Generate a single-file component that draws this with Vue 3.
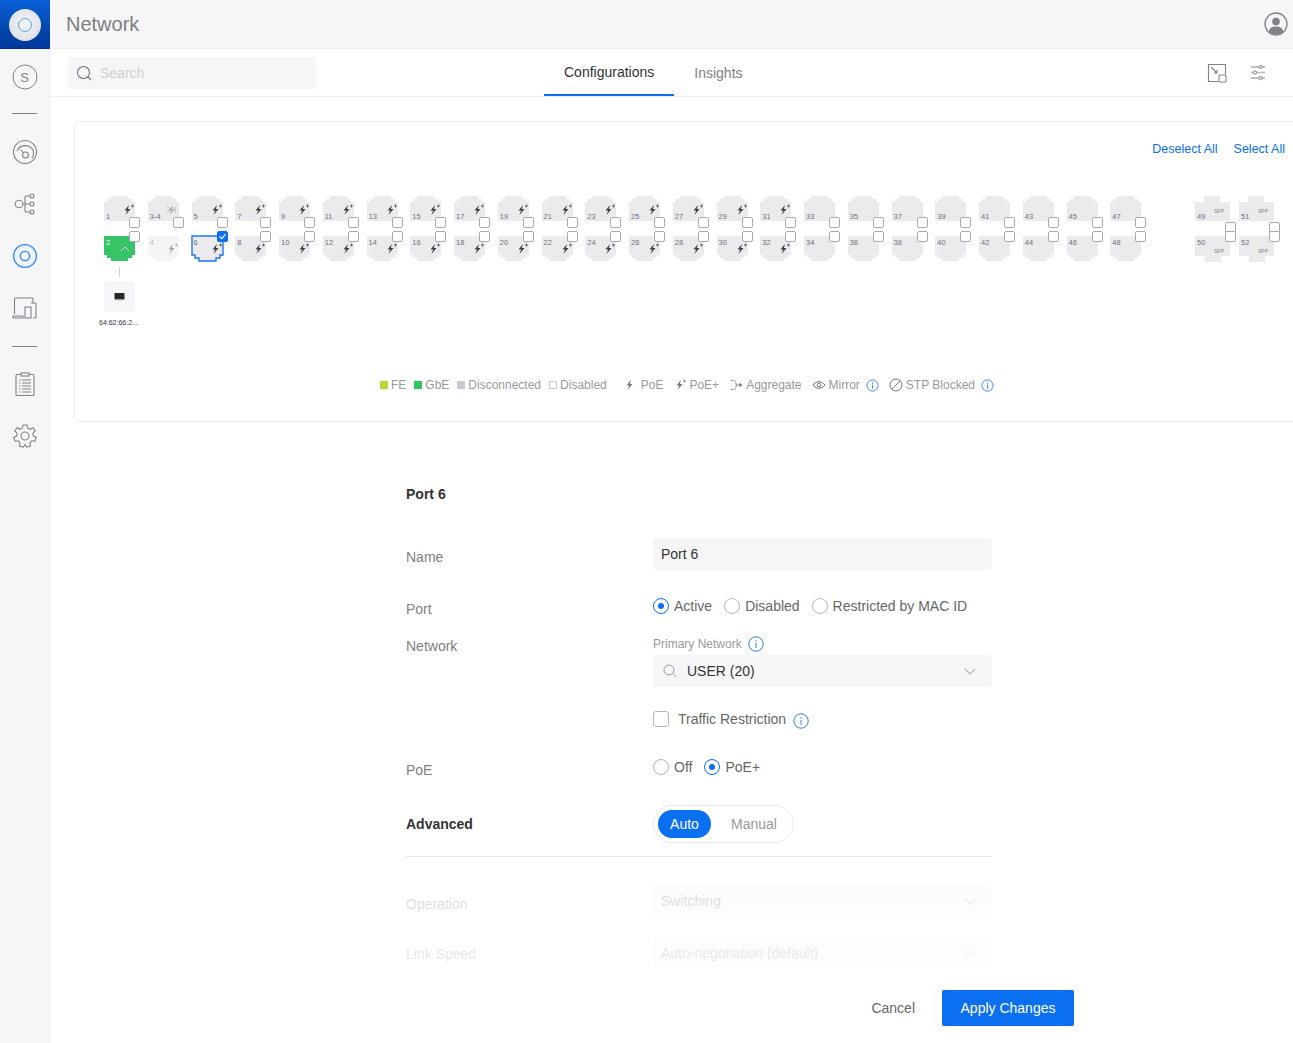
<script setup>
const cols = []
for (let i = 1; i <= 47; i += 2) {
  const top = i === 3 ? '3-4' : String(i)
  const bolt = i <= 31
  cols.push({
    top: { n: top, bolt: i !== 3 && bolt, agg: i === 3 },
    bottom: {
      n: String(i + 1),
      bolt: i + 1 <= 32 && i + 1 !== 2,
      green: i + 1 === 2,
      faded: i + 1 === 4,
      selected: i + 1 === 6,
    },
  })
}
const topPts = '0,6 3,6 3,3 7,3 7,0 24,0 24,3 28,3 28,6 31,6 31,25 0,25'
const botPts = '0,0 31,0 31,19 28,19 28,22 24,22 24,25 7,25 7,22 3,22 3,19 0,19'
const sfpTop = '0,6 9,6 9,0 25,0 25,6 35,6 35,25 0,25'
const sfpBot = '0,0 35,0 35,20 26,20 26,26 10,26 10,20 0,20'
const sfps = [
  { top: '49', bottom: '50' },
  { top: '51', bottom: '52' },
]
const bolt = 'M7 1 L2.5 6.5 L5.2 6.5 L3.5 11 L8.5 5 L5.8 5 Z'
const legendSwatches = [
  { label: 'FE', cls: 'fe' },
  { label: 'GbE', cls: 'gbe' },
  { label: 'Disconnected', cls: 'disc' },
  { label: 'Disabled', cls: 'dis' },
]
</script>

<template>
  <div class="app">
    <aside class="side">
      <div class="logo"><span class="logo-disc"><span class="logo-ring"></span></span></div>
      <div class="nav">
        <div class="nav-item">
          <svg width="26" height="26" viewBox="0 0 26 26" fill="none" stroke="#808288"><circle cx="13" cy="13" r="12"/></svg>
          <span class="nav-s">S</span>
        </div>
        <hr class="nav-line first" />
        <div class="nav-item">
          <svg width="26" height="26" viewBox="0 0 26 26" fill="none" stroke="#808288" stroke-width="1.1"><circle cx="13" cy="13" r="11.5"/><path d="M5 12 A9 9 0 0 1 21 11 A9 9 0 0 1 20 19"/><circle cx="13.5" cy="16" r="3"/><path d="M11.5 14 L8.5 10.5"/></svg>
        </div>
        <div class="nav-item">
          <svg width="26" height="26" viewBox="0 0 26 26" fill="none" stroke="#808288" stroke-width="1.1"><circle cx="7" cy="13" r="3.8"/><circle cx="20" cy="5" r="2"/><circle cx="20" cy="13" r="2"/><circle cx="20" cy="21" r="2"/><path d="M10.8 13 H18 M13 13 V6 Q13 5 14 5 H18 M13 13 V20 Q13 21 14 21 H18"/></svg>
        </div>
        <div class="nav-item">
          <svg width="26" height="26" viewBox="0 0 26 26" fill="none"><circle cx="13" cy="13" r="11.4" fill="#f0f3fb" stroke="#2f84ff" stroke-width="1.3"/><circle cx="13" cy="13" r="4.6" stroke="#2f84ff" stroke-width="1.3"/></svg>
        </div>
        <div class="nav-item">
          <svg width="26" height="26" viewBox="0 0 26 26" fill="none" stroke="#808288" stroke-width="1.1"><path d="M2.5 19 V4 Q2.5 3 3.5 3 H20 Q21 3 21 4 V8"/><path d="M1 21 H11 V23 H1 Z"/><rect x="13" y="12" width="6" height="11"/><path d="M19 8 H23 Q24 8 24 9 V22 Q24 23 23 23 H21"/></svg>
        </div>
        <hr class="nav-line second" />
        <div class="nav-item">
          <svg width="26" height="26" viewBox="0 0 26 26" fill="none" stroke="#808288" stroke-width="1.1"><rect x="4" y="3.5" width="18" height="21" rx="1"/><rect x="9" y="2" width="8" height="3" fill="#f6f6f8"/><path d="M7 9 H8.5 M10 9 H19 M7 12 H8.5 M10 12 H19 M7 15 H8.5 M10 15 H19 M7 18 H8.5 M10 18 H19 M7 21 H8.5 M10 21 H19"/></svg>
        </div>
        <div class="nav-item">
          <svg width="26" height="26" viewBox="0 0 26 26" fill="none" stroke="#808288" stroke-width="1.1"><circle cx="13" cy="13" r="4"/><path d="M11 2 H15 L15.7 5.2 L18 6.3 L20.9 4.7 L23.3 8 L21 10.2 L21.3 12.8 L24.2 14.4 L23 18.2 L19.8 17.8 L18 19.7 L18.5 23 L14.7 24.2 L13 21.5 L11.3 24.2 L7.5 23 L8 19.7 L6.2 17.8 L3 18.2 L1.8 14.4 L4.7 12.8 L5 10.2 L2.7 8 L5.1 4.7 L8 6.3 L10.3 5.2 Z"/></svg>
        </div>
      </div>
    </aside>

    <div class="main">
      <header class="top">
        <h1 class="title">Network</h1>
        <svg class="user" width="24" height="24" viewBox="0 0 24 24" fill="none"><circle cx="12" cy="12" r="11" stroke="#808288" stroke-width="1.3"/><circle cx="12" cy="9.5" r="3.8" fill="#808288"/><path d="M4.8 19.5 C5.5 15.5 8.5 14.5 12 14.5 C15.5 14.5 18.5 15.5 19.2 19.5 C17 21.7 14.8 22.5 12 22.5 C9.2 22.5 7 21.7 4.8 19.5 Z" fill="#808288"/></svg>
      </header>

      <nav class="bar">
        <div class="search">
          <svg width="16" height="16" viewBox="0 0 16 16" fill="none" stroke="#73767c" stroke-width="1.1"><circle cx="7.5" cy="7.5" r="6"/><path d="M12 12 L15 15"/></svg>
          <span>Search</span>
        </div>
        <div class="tabs">
          <span class="tab active">Configurations</span>
          <span class="tab">Insights</span>
        </div>
        <div class="tools">
          <svg width="20" height="20" viewBox="0 0 20 20" fill="none" stroke="#808288" stroke-width="1.1"><path d="M11 18.5 H1.5 V1.5 H18.5 V11"/><rect x="12" y="12" width="7" height="7" rx="0.5"/><path d="M4 4 L10 10 M10 7 V10 H7"/></svg>
          <svg width="18" height="18" viewBox="0 0 18 18" fill="none" stroke="#808288" stroke-width="1"><path d="M2 3 H16 M2 14 H16"/><path d="M2 8.5 H16" stroke="#b9bbc0" stroke-width="1.6"/><circle cx="11.5" cy="3" r="1.6" fill="#fff"/><circle cx="6" cy="8.5" r="1.6" fill="#fff"/><circle cx="11.5" cy="14" r="1.6" fill="#fff"/></svg>
        </div>
      </nav>

      <div class="content">
        <section class="card">
          <div class="card-links"><span>Deselect All</span><span>Select All</span></div>
          <div class="switch">
            <div v-for="(c, ci) in cols" :key="ci" class="col">
              <div class="port top-port">
                <svg class="shape" width="31" height="26" viewBox="0 0 31 26"><polygon :points="topPts" fill="#ebebed"/></svg>
                <span class="num num-top">{{ c.top.n }}</span>
                <svg v-if="c.top.bolt" class="bolt bolt-top" width="12" height="12" viewBox="0 0 12 12"><path :d="bolt" fill="#3c3f44"/><path d="M9 2 H12 M10.5 0.5 V3.5" stroke="#3c3f44" stroke-width="0.7"/></svg>
                <svg v-if="c.top.agg" class="bolt bolt-top" width="12" height="12" viewBox="0 0 12 12"><path :d="bolt" fill="#a9abaf"/><path d="M1 2 L4 5 L1 9 M9 3 V9" stroke="#a9abaf" fill="none" stroke-width="0.8"/></svg>
                <span class="check"></span>
              </div>
              <div class="port bottom-port" :class="{ faded: c.bottom.faded }">
                <svg class="shape" width="31" height="26" viewBox="0 0 31 26">
                  <polygon :points="botPts" :fill="c.bottom.green ? '#36c467' : '#ebebed'" :stroke="c.bottom.selected ? '#1a73f8' : 'none'" :stroke-width="c.bottom.selected ? 1.4 : 0"/>
                </svg>
                <span class="num num-bot" :class="{ white: c.bottom.green }">{{ c.bottom.n }}</span>
                <svg v-if="c.bottom.bolt" class="bolt bolt-bot" width="12" height="12" viewBox="0 0 12 12"><path :d="bolt" fill="#3c3f44"/><path d="M9 2 H12 M10.5 0.5 V3.5" stroke="#3c3f44" stroke-width="0.7"/></svg>
                <svg v-if="c.bottom.green" class="bolt chev" width="10" height="6" viewBox="0 0 10 6" fill="none" stroke="#fff" stroke-width="0.9"><path d="M1 5 L5 1 L9 5"/></svg>
                <span v-if="!c.bottom.green && !c.bottom.faded" class="check" :class="{ checked: c.bottom.selected }">
                  <svg v-if="c.bottom.selected" width="9" height="9" viewBox="0 0 9 9" fill="none" stroke="#fff" stroke-width="1.2"><path d="M1.5 4.5 L3.8 6.7 L7.5 2.2"/></svg>
                </span>
                <span v-if="c.bottom.green" class="check"></span>
              </div>
              <div v-if="ci === 0" class="device">
                <span class="wire"></span>
                <div class="device-box">
                  <svg width="11" height="8" viewBox="0 0 11 8"><rect x="0.5" y="0" width="10" height="6.5" fill="#26282b"/><rect x="3" y="6.5" width="5" height="1.5" fill="#cfd0d3"/></svg>
                </div>
                <span class="mac">64:62:66:2...</span>
              </div>
            </div>
            <div class="sfps">
              <div v-for="s in sfps" :key="s.top" class="col sfp-col">
                <div class="port sfp">
                  <svg class="shape" width="35" height="26" viewBox="0 0 35 26"><polygon :points="sfpTop" fill="#ebebed"/></svg>
                  <span class="num num-top">{{ s.top }}</span>
                  <span class="sfp-tag tag-top">SFP</span>
                  <span class="check"></span>
                </div>
                <div class="port sfp bottom-port">
                  <svg class="shape" width="35" height="26" viewBox="0 0 35 26"><polygon :points="sfpBot" fill="#ebebed"/></svg>
                  <span class="num num-bot">{{ s.bottom }}</span>
                  <span class="sfp-tag tag-bot">SFP</span>
                  <span class="check"></span>
                </div>
              </div>
            </div>
          </div>
          <div class="legend">
            <span v-for="l in legendSwatches" :key="l.label" class="leg"><i class="sw" :class="l.cls"></i>{{ l.label }}</span>
            <span class="leg leg-poe">
              <svg width="12" height="12" viewBox="0 0 12 12"><path :d="bolt" fill="#73767c"/></svg>PoE
            </span>
            <span class="leg leg-gap">
              <svg width="12" height="12" viewBox="0 0 12 12"><path :d="bolt" fill="#73767c"/><path d="M9 2 H12 M10.5 0.5 V3.5" stroke="#73767c" stroke-width="0.7"/></svg>PoE+
            </span>
            <span class="leg leg-gap">
              <svg width="14" height="12" viewBox="0 0 14 12" fill="none" stroke="#73767c"><path d="M2 1.5 H4 Q7 1.5 7 4 V8 Q7 10.5 4 10.5 H2" stroke-dasharray="2 1"/><path d="M7 6 H11"/><path d="M10.5 3.8 L13.5 6 L10.5 8.2 Z" fill="#73767c" stroke="none"/></svg>Aggregate
            </span>
            <span class="leg leg-gap">
              <svg width="14" height="10" viewBox="0 0 14 10" fill="none" stroke="#73767c"><path d="M1 5 Q7 -2 13 5 Q7 12 1 5 Z"/><circle cx="7" cy="5" r="1.8"/></svg>Mirror
              <svg class="info" width="13" height="13" viewBox="0 0 14 14" fill="none" stroke="#2f7ff0"><circle cx="7" cy="7" r="6"/><path d="M7 6 V10.5 M7 3.5 V5"/></svg>
            </span>
            <span class="leg leg-gap">
              <svg width="14" height="14" viewBox="0 0 14 14" fill="none" stroke="#73767c"><circle cx="7" cy="7" r="6"/><path d="M2.8 11.2 L11.2 2.8"/></svg>STP Blocked
              <svg class="info" width="13" height="13" viewBox="0 0 14 14" fill="none" stroke="#2f7ff0"><circle cx="7" cy="7" r="6"/><path d="M7 6 V10.5 M7 3.5 V5"/></svg>
            </span>
          </div>
        </section>

        <form class="form" @submit.prevent>
          <h2 class="section">Port 6</h2>
          <div class="row row-name">
            <label>Name</label>
            <div class="field">Port 6</div>
          </div>
          <div class="row row-port">
            <label>Port</label>
            <div class="radios">
              <span class="radio on"></span><span class="r-text">Active</span>
              <span class="radio"></span><span class="r-text">Disabled</span>
              <span class="radio"></span><span class="r-text">Restricted by MAC ID</span>
            </div>
          </div>
          <div class="row row-net">
            <label>Network</label>
            <div>
              <div class="sub">Primary Network
                <svg width="16" height="16" viewBox="0 0 16 16" fill="none" stroke="#2f7ff0"><circle cx="8" cy="8" r="7.2"/><path d="M8 7 V12 M8 4 V5.6"/></svg>
              </div>
              <div class="field select">
                <svg width="14" height="14" viewBox="0 0 14 14" fill="none" stroke="#9b9da2"><circle cx="6" cy="6" r="5"/><path d="M9.8 9.8 L13 13"/></svg>
                <span class="val">USER (20)</span>
                <svg class="chev-d" width="12" height="7" viewBox="0 0 12 7" fill="none" stroke="#b5b7bb" stroke-width="1.2"><path d="M1 1 L6 6 L11 1"/></svg>
              </div>
              <div class="traffic">
                <span class="box"></span><span>Traffic Restriction</span>
                <svg width="16" height="16" viewBox="0 0 16 16" fill="none" stroke="#2f7ff0"><circle cx="8" cy="8" r="7.2"/><path d="M8 7 V12 M8 4 V5.6"/></svg>
              </div>
            </div>
          </div>
          <div class="row row-poe">
            <label>PoE</label>
            <div class="radios">
              <span class="radio"></span><span class="r-text">Off</span>
              <span class="radio on"></span><span class="r-text">PoE+</span>
            </div>
          </div>
          <div class="row row-adv">
            <h2 class="section">Advanced</h2>
            <div class="seg"><span class="seg-on">Auto</span><span class="seg-off">Manual</span></div>
          </div>
          <hr class="rule" />
          <div class="row row-op">
            <label>Operation</label>
            <div class="field select"><span class="val-plain">Switching</span>
              <svg class="chev-d" width="12" height="7" viewBox="0 0 12 7" fill="none" stroke="#b5b7bb" stroke-width="1.2"><path d="M1 1 L6 6 L11 1"/></svg>
            </div>
          </div>
          <div class="row row-speed">
            <label>Link Speed</label>
            <div class="field select"><span class="val-plain">Auto-negotiation (default)</span>
              <svg class="chev-d" width="12" height="7" viewBox="0 0 12 7" fill="none" stroke="#b5b7bb" stroke-width="1.2"><path d="M1 1 L6 6 L11 1"/></svg>
            </div>
          </div>
        </form>

        <div class="footer">
          <span class="cancel">Cancel</span>
          <span class="apply">Apply Changes</span>
        </div>
      </div>
    </div>
  </div>
</template>

<style>
html, body { margin: 0; overflow: hidden; }
</style>

<style scoped>
* { box-sizing: border-box; }
.app { display: flex; width: 1293px; height: 1043px; overflow: hidden; background: #fff; font-family: "Liberation Sans", Arial, sans-serif; color: #808080; }
.side { width: 50px; flex: none; background: #f6f6f8; border-right: 1px solid #eeeef0; }
.logo { height: 49px; width: 50px; display: flex; align-items: center; justify-content: center; background: linear-gradient(180deg, #0a5fd8 0%, #0346ad 60%, #02369a 100%); }
.logo-disc { width: 32px; height: 32px; border-radius: 50%; background: radial-gradient(circle at 50% 45%, #f4f5f7, #d5dae3); display: flex; align-items: center; justify-content: center; }
.logo-ring { width: 14px; height: 14px; border-radius: 50%; border: 1.5px solid #5aa4f5; }
.nav { display: flex; flex-direction: column; align-items: center; padding-top: 15px; }
.nav-item { position: relative; width: 26px; height: 26px; margin-bottom: 26px; display: flex; }
.nav-s { position: absolute; inset: 0; display: flex; align-items: center; justify-content: center; font-size: 13px; color: #808288; }
.nav-line { width: 25px; height: 1px; background: #808288; border: 0; margin: 0; }
.nav-line.first { margin: -3px 0 25px; }
.nav-line.second { margin: -1px 0 24px; }
.main { flex: 1; min-width: 0; display: flex; flex-direction: column; }
.top { height: 49px; flex: none; background: #f6f6f8; border-bottom: 1px solid #eeeef0; display: flex; align-items: center; justify-content: space-between; padding: 0 5px 0 16px; }
.title { margin: 0; font-size: 20px; font-weight: 400; color: #808080; }
.bar { height: 48px; flex: none; border-bottom: 1px solid #eeeef0; display: flex; align-items: flex-start; padding: 8px 0 0 18px; }
.search { width: 248px; height: 32px; background: #f6f6f8; border-radius: 4px; display: flex; align-items: center; gap: 8px; padding-left: 8px; font-size: 14px; color: #cdd0d6; }
.tabs { display: flex; margin: -8px 0 0 228px; }
.tab { height: 47px; padding: 0 20px; display: flex; align-items: center; font-size: 14px; color: #808080; }
.tab.active { color: #333; border-bottom: 2px solid #0a6ff0; }
.tools { margin-left: auto; display: flex; align-items: center; gap: 22px; padding: 0 26px 0 0; margin-top: 0; height: 32px; }
.content { position: relative; flex: 1; min-height: 0; padding: 24px 0 0 24px; }
.card { width: 1226px; height: 301px; border: 1px solid #ebebed; border-radius: 6px; display: flex; flex-direction: column; }
.card-links { display: flex; justify-content: flex-end; gap: 16px; padding: 20px 14px 0 0; font-size: 12.5px; line-height: 15px; color: #0a6ff0; }
.switch { display: flex; align-items: flex-start; margin-top: 39px; padding-left: 29px; height: 179px; }
.col { flex: 0 0 43.75px; width: 43.75px; display: flex; flex-direction: column; gap: 14px; }
.port { position: relative; width: 31px; height: 26px; }
.shape { display: block; overflow: visible; }
.num { position: absolute; left: 2px; font-size: 7.5px; line-height: 8px; color: #6f7177; }
.num-top { top: 17px; }
.num-bot { top: 3px; }
.num.white { color: #fff; }
.bolt { position: absolute; right: 1px; }
.bolt-top { top: 8px; }
.bolt-bot { top: 7px; }
.chev { top: 10px; right: 5px; }
.faded { opacity: 0.45; }
.check { position: absolute; left: 25px; width: 11px; height: 11px; border: 1px solid #a8aaae; border-radius: 2px; background: #fff; display: flex; align-items: center; justify-content: center; }
.top-port .check { top: 21px; }
.bottom-port .check { top: -5px; }
.check.checked { background: #0a6ff0; border-color: #0a6ff0; }
.device { display: flex; flex-direction: column; align-items: flex-start; width: 45px; margin-top: -9px; position: relative; }
.wire { width: 1px; height: 10px; background: #d3d4d7; margin: 0 0 4px 15px; }
.device-box { width: 31px; height: 31px; background: #f6f6f8; border-radius: 4px; display: flex; align-items: center; justify-content: center; }
.mac { font-size: 7px; line-height: 9px; margin: 6px 0 0 -5px; color: #33353a; white-space: nowrap; }
.sfps { display: flex; margin-left: 41px; }
.sfp-col { flex: 0 0 44px; width: 44px; }
.sfp { width: 35px; }
.sfp .check { left: 30px; }
.sfp-tag { position: absolute; font-size: 5px; line-height: 6px; color: #7c7e83; right: 6px; }
.tag-top { top: 12px; }
.tag-bot { top: 12px; }
.legend { display: flex; justify-content: center; align-items: center; font-size: 12px; color: #999; height: 20px; margin-top: 0; }
.leg { display: inline-flex; align-items: center; gap: 3px; margin-right: 8px; white-space: nowrap; }
.leg:last-child { margin-right: 0; }
.sw { width: 8px; height: 8px; display: block; }
.sw.fe { background: #b5d936; }
.sw.gbe { background: #2dc95f; }
.sw.disc { background: #c8c9d3; }
.sw.dis { background: #fff; border: 1px solid #c8c9d3; }
.leg-poe { margin-left: 9px; gap: 5px; margin-right: 11px; }
.leg-gap { margin-right: 10px; }
.info { margin-left: 3px; }
.form { width: 586px; margin-left: 332px; color: #808080; font-size: 14px; }
.section { margin: 0; font-size: 14px; font-weight: 700; color: #333; line-height: 16px; }
.form > .section { margin-top: 64px; }
.row { display: grid; grid-template-columns: 247px 339px; align-items: start; }
.row label { display: block; line-height: 16px; }
.field { height: 32px; background: #f6f6f8; border-radius: 3px; display: flex; align-items: center; padding: 0 8px; color: #333; }
.row-name { margin-top: 36px; }
.row-name label { padding-top: 11px; }
.row-port { margin-top: 30px; }
.row-port label { padding-top: 1px; }
.radios { display: flex; align-items: center; height: 16px; margin-top: -2px; }
.radio { width: 16px; height: 16px; border-radius: 50%; border: 1px solid #b4b6ba; flex: none; display: flex; align-items: center; justify-content: center; }
.radio.on { border-color: #0a6ff0; }
.radio.on::after { content: ""; width: 6px; height: 6px; border-radius: 50%; background: #0a6ff0; }
.r-text { margin: 0 12px 0 5px; color: #666; }
.row-net { margin-top: 21px; }
.sub { display: flex; align-items: center; gap: 6px; font-size: 12px; line-height: 16px; color: #999; margin-top: -2px; }
.select { margin-top: 3px; padding: 0 8px; position: relative; }
.select > svg:first-child { margin: 0 10px 0 2px; }
.val { color: #333; }
.val-plain { color: #808080; }
.chev-d { margin-left: auto; margin-right: 8px; }
.traffic { display: flex; align-items: center; gap: 8px; margin-top: 24px; color: #666; height: 16px; }
.traffic svg { margin-left: -1px; margin-top: 3px; }
.box { width: 16px; height: 16px; border: 1px solid #b4b6ba; border-radius: 3px; margin-right: 1px; }
.row-poe { margin-top: 34px; }
.row-poe label { padding-top: 1px; }
.row-adv { margin-top: 27px; align-items: center; }
.seg { width: 141px; height: 38px; border: 1px solid #ebebed; border-radius: 19px; display: flex; align-items: center; padding: 0 4px; }
.seg-on { width: 53px; height: 28px; border-radius: 14px; background: #0a6ff0; color: #fff; display: flex; align-items: center; justify-content: center; }
.seg-off { margin-left: 20px; color: #999; }
.rule { border: 0; height: 1px; background: #e6e6e8; margin: 13px 0 0; }
.row-op { margin-top: 28px; }
.row-op label { padding-top: 11px; }
.row-speed { margin-top: 20px; }
.row-speed label { padding-top: 9px; }
.row-op .select, .row-speed .select { margin-top: 0; }
.footer { position: absolute; left: 0; right: 0; bottom: 0; height: 170px; background: linear-gradient(180deg, rgba(255,255,255,0.7) 0%, rgba(255,255,255,0.82) 50%, #fff 72%); display: flex; justify-content: flex-end; align-items: flex-end; padding: 0 219px 17px 0; }
.cancel { font-size: 14px; color: #666; height: 36px; display: flex; align-items: center; margin-right: 27px; }
.apply { width: 132px; height: 36px; background: #0a6ff0; color: #fff; border-radius: 2px; font-size: 14px; display: flex; align-items: center; justify-content: center; }
</style>
